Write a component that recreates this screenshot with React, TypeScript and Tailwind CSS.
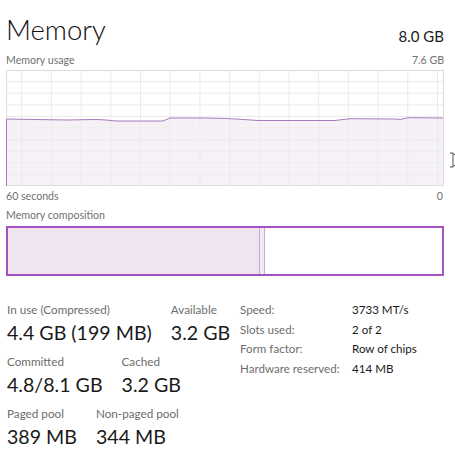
import React from "react";

const pts: [number, number][] = [
  [0, 49], [30, 49.5], [60, 50], [90, 49.5], [100, 50], [110, 51], [157, 51], [164, 48],
  [200, 48], [219, 48.5], [230, 49], [252, 50.5], [329, 50.5], [344, 48.7], [390, 49],
  [394, 49.5], [402, 47.7], [437, 48],
];

function Graph() {
  const W = 438;
  const H = 116;
  const vx: number[] = [];
  for (let x = 15.7; x < W; x += 29.7) vx.push(x);
  const hy: number[] = [];
  for (let i = 1; i < 10; i++) hy.push((H / 10) * i);
  const line = pts.map((p) => `${p[0]},${p[1]}`).join(" ");
  const poly = `0,${H} ${line} ${W},${pts[pts.length - 1][1]} ${W},${H}`;
  return (
    <svg width={W} height={H} viewBox={`0 0 ${W} ${H}`} className="block">
      <rect x="0" y="0" width={W} height={H} fill="#ffffff" />
      <polygon points={poly} fill="#f5f1f7" />
      {vx.map((x) => (
        <line key={"v" + x} x1={x} y1={0} x2={x} y2={H} stroke="#ebebeb" strokeWidth="1" />
      ))}
      {hy.map((y) => (
        <line key={"h" + y} x1={0} y1={y} x2={W} y2={y} stroke="#ebebeb" strokeWidth="1" />
      ))}
      <polyline points={`0.5,${H} ${line}`} fill="none" stroke="#a77bbb" strokeWidth="1" />
      <rect x="0.5" y="0.5" width={W - 1} height={H - 1} fill="none" stroke="#dedede" strokeWidth="1" />
      <line x1="0.5" y1={49} x2="0.5" y2={H} stroke="#a77bbb" strokeWidth="1" />
    </svg>
  );
}

function Stat({ label, value }: { label: string; value: string }) {
  return (
    <div className="flex flex-col">
      <div className="text-[11.7px] leading-[19px] text-[#6d6d6d]">{label}</div>
      <div className="text-[19.6px] leading-[28px] text-[#1a1a1a]">{value}</div>
    </div>
  );
}

export default function App() {
  return (
    <div
      className="relative w-[455px] h-[450px] bg-white overflow-hidden text-[#1a1a1a]"
      style={{ fontFamily: 'Lato, "Noto Sans", sans-serif' }}
    >
      <div className="pl-[6px] pr-[11px]">
        <div className="flex items-baseline justify-between h-[52px] pt-[12px]">
          <div className="text-[27.5px] leading-[36px] font-light text-[#111]">Memory</div>
          <div className="text-[15px] leading-[20px] relative top-[2px]">8.0 GB</div>
        </div>
        <div className="flex justify-between text-[10.6px] leading-[16px] text-[#707070] h-[18px]">
          <span>Memory usage</span>
          <span>7.6 GB</span>
        </div>
        <Graph />
        <div className="flex justify-between text-[10.6px] leading-[16px] text-[#707070] mt-[2px]">
          <span>60 seconds</span>
          <span className="pr-[1px]">0</span>
        </div>
        <div className="text-[10.6px] leading-[16px] text-[#707070] mt-[3px]">Memory composition</div>
        <div className="mt-[3px] h-[50px] border-2 border-[#a551c2] flex">
          <div className="w-[251px] bg-[#eee5f1]" />
          <div className="w-[1px] bg-[#c9a9d6]" />
          <div className="w-[4px] bg-[#f1eaf4]" />
          <div className="w-[1px] bg-[#c9a9d6]" />
          <div className="flex-1 bg-white" />
        </div>
        <div className="flex items-start mt-[24px]">
          <div className="flex flex-col gap-[5px] pl-[1px] w-[234px]">
            <div className="flex gap-[19px]">
              <Stat label="In use (Compressed)" value="4.4 GB (199 MB)" />
              <Stat label="Available" value="3.2 GB" />
            </div>
            <div className="flex gap-[19px]">
              <Stat label="Committed" value="4.8/8.1 GB" />
              <Stat label="Cached" value="3.2 GB" />
            </div>
            <div className="flex gap-[19px]">
              <Stat label="Paged pool" value="389 MB" />
              <Stat label="Non-paged pool" value="344 MB" />
            </div>
          </div>
          <div className="grid grid-cols-[112px_1fr] content-start text-[11.6px] leading-[19.5px]">
            <span className="text-[#6d6d6d]">Speed:</span>
            <span>3733 MT/s</span>
            <span className="text-[#6d6d6d]">Slots used:</span>
            <span>2 of 2</span>
            <span className="text-[#6d6d6d]">Form factor:</span>
            <span>Row of chips</span>
            <span className="text-[#6d6d6d]">Hardware reserved:</span>
            <span>414 MB</span>
          </div>
        </div>
      </div>
      <svg className="absolute left-[449px] top-[152px]" width="6" height="16" viewBox="0 0 6 16">
        <path d="M1 1 H4 V15 H1 M4 1 L6 3 M4 15 L6 13" fill="none" stroke="#555" strokeWidth="1" />
      </svg>
    </div>
  );
}
